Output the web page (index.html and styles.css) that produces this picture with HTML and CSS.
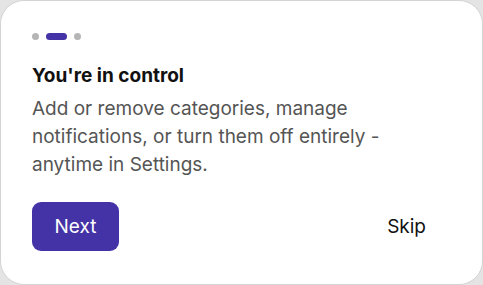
FILE: index.html
```html
<!DOCTYPE html>
<html lang="en">
<head>
    <meta charset="UTF-8">
    <meta name="viewport" content="width=device-width, initial-scale=1.0">
    <title>Onboarding</title>
    <link rel="stylesheet" href="styles.css">
</head>
<body>
    <div class="card">
        <div class="steps">
            <span class="step"></span>
            <span class="step active"></span>
            <span class="step"></span>
        </div>
        <div class="heading">You're in control</div>
        <p class="desc">Add or remove categories, manage notifications, or turn them off entirely - anytime in Settings.</p>
        <div class="actions">
            <button class="btn-next">Next</button>
            <button class="btn-skip">Skip</button>
        </div>
    </div>
</body>
</html>
```

FILE: styles.css
```css
body {
    font-family: Inter, "Noto Sans", sans-serif;
    margin: 0;
    background: #e4e4e4;
    width: 483px;
    height: 285px;
    overflow: hidden;
}
.card {
    box-sizing: border-box;
    width: 483px;
    height: 285px;
    background: #fff;
    border: 1px solid #d4d4d4;
    border-radius: 24px;
    padding: 32px 31px 0 31px;
}
.steps {
    display: flex;
    gap: 7px;
    height: 7px;
}
.step {
    width: 7px;
    height: 7px;
    border-radius: 4px;
    background: #b5b5b5;
}
.step.active {
    width: 21px;
    background: #4433a6;
}
.heading {
    margin-top: 24px;
    font-size: 19px;
    font-weight: 700;
    line-height: 24px;
    color: #111;
}
.desc {
    margin: 7px 0 0;
    font-size: 19px;
    line-height: 28px;
    color: #555;
    max-width: 390px;
}
.actions {
    display: flex;
    justify-content: space-between;
    align-items: center;
    margin-top: 23px;
}
.btn-next {
    font-family: inherit;
    background: #4433a6;
    color: #fff;
    border: none;
    border-radius: 9px;
    width: 87px;
    height: 49px;
    font-size: 19px;
    padding: 0;
    cursor: pointer;
}
.btn-skip {
    font-family: inherit;
    background: none;
    border: none;
    color: #111;
    font-size: 19px;
    padding: 0 25px;
    cursor: pointer;
}
```
